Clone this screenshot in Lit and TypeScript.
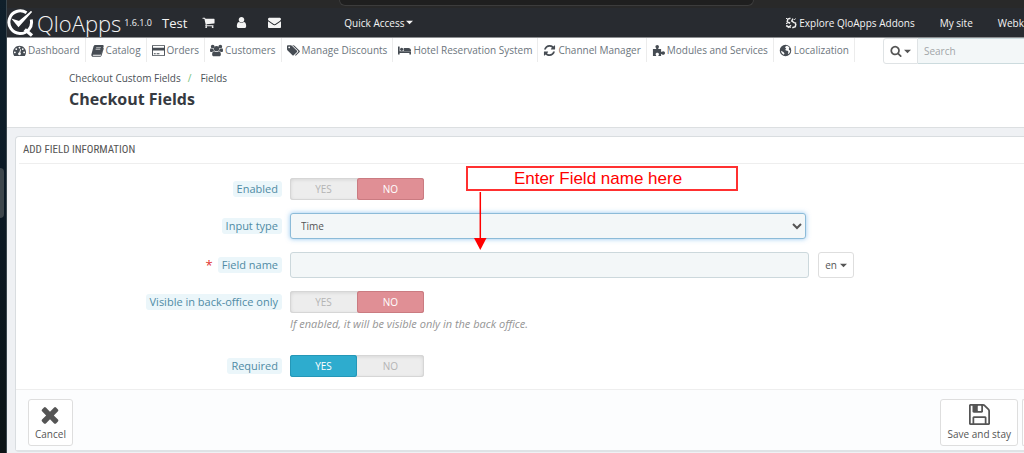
import { LitElement, html, css, svg, nothing } from "lit";
import { customElement, property, state } from "lit/decorators.js";

interface Glyph {
  box: string;
  d: string;
}

const glyphs: Record<string, Glyph> = {
  cart: {
    box: "0 0 1792 1792",
    d: "M704 1536q0 52-38 90t-90 38-90-38-38-90 38-90 90-38 90 38 38 90zm896 0q0 52-38 90t-90 38-90-38-38-90 38-90 90-38 90 38 38 90zm128-1088v512q0 24-16.500 42.500t-40.500 21.500l-1044 122q13 60 13 70 0 16-24 64h920q26 0 45 19t19 45-19 45-45 19h-1024q-26 0-45-19t-19-45q0-11 8-31.500t16-36 21.500-40 15.500-29.500l-177-823h-204q-26 0-45-19t-19-45 19-45 45-19h256q16 0 28.500 6.500t19.500 15.500 13 24.500 8 26 5.500 29.500 4.500 26h1201q26 0 45 19t19 45z",
  },
  user: {
    box: "0 0 1792 1792",
    d: "M1536 1399q0 109-62.500 187t-150.500 78h-854q-88 0-150.500-78t-62.500-187q0-85 8.500-160.500t31.500-152 58.500-131 94-89 134.500-34.500q131 128 313 128t313-128q76 0 134.500 34.500t94 89 58.500 131 31.500 152 8.500 160.500zm-256-887q0 159-112.500 271.500t-271.500 112.500-271.500-112.500-112.500-271.500 112.500-271.500 271.500-112.500 271.500 112.500 112.500 271.500z",
  },
  mail: {
    box: "0 0 1792 1792",
    d: "M1792 710v794q0 66-47 113t-113 47h-1472q-66 0-113-47t-47-113v-794q44 49 101 87 362 246 497 345 57 42 92.500 65.500t94.500 48 110 24.500h2q51 0 110-24.500t94.500-48 92.500-65.500q170-123 498-345 57-39 100-87zm0-294q0 79-49 151t-122 123q-376 261-468 325-10 7-42.500 31t-54 38.500-52 32.500-57.500 27-50 9h-2q-23 0-50-9t-57.500-27-52-32.500-54-38.500-42.500-31q-91-64-262-182.500t-205-142.500q-62-42-117-115.500t-55-136.500q0-78 41.500-130t118.500-52h1472q65 0 112.500 47t47.500 113z",
  },
  gauge: {
    box: "0 0 1792 1792",
    d: "M384 1152q0-53-37.500-90.500t-90.500-37.500-90.500 37.500-37.500 90.500 37.500 90.500 90.500 37.500 90.500-37.500 37.500-90.500zm192-448q0-53-37.500-90.500t-90.500-37.500-90.500 37.500-37.500 90.500 37.500 90.500 90.500 37.500 90.500-37.500 37.500-90.500zm428 481l101-382q6-26-7.500-48.500t-38.500-29.500-48 6.500-30 39.500l-101 382q-60 5-107 43.500t-63 98.500q-20 77 20 146t117 89 146-20 89-117q16-60-6-117t-72-91zm660-33q0-53-37.500-90.500t-90.500-37.500-90.500 37.500-37.500 90.500 37.500 90.500 90.500 37.500 90.500-37.500 37.500-90.500zm-640-640q0-53-37.500-90.500t-90.500-37.500-90.500 37.500-37.500 90.500 37.500 90.500 90.500 37.500 90.500-37.500 37.500-90.500zm448 192q0-53-37.500-90.500t-90.500-37.500-90.500 37.500-37.500 90.500 37.500 90.500 90.500 37.500 90.500-37.500 37.500-90.500zm320 448q0 261-141 483-19 29-54 29h-1402q-35 0-54-29-141-221-141-483 0-182 71-348t191-286 286-191 348-71 348 71 286 191 191 286 71 348z",
  },
  book: {
    box: "0 0 14 14",
    d: "M4.600 1h7.800c1 0 1.500.7 1.200 1.600l-2.300 7.800c-.2.8-.9 1.200-1.700 1.200H2.500c-.6 0-.9.2-.7.6.1.3.4.4.8.4h7.300c.4 0 .7-.2.8-.6l2.500-7.900c.5.3.6.8.4 1.400l-2.200 6.900c-.3.800-1 1.400-1.900 1.400H2.400C1 13.800 0 12.600.4 11.300L2.700 2.800C3 1.600 3.600 1 4.600 1zM5.700 3.200l-.2.7h5l.2-.7zM5.100 5.200l-.2.7h5l.2-.7z",
  },
  card: {
    box: "0 0 1792 1792",
    d: "M1632 128q66 0 113 47t47 113v1216q0 66-47 113t-113 47h-1472q-66 0-113-47t-47-113v-1216q0-66 47-113t113-47h1472zm-1472 128q-13 0-22.500 9.500t-9.500 22.500v224h1536v-224q0-13-9.500-22.500t-22.500-9.500h-1472zm1472 1280q13 0 22.500-9.500t9.500-22.500v-608h-1536v608q0 13 9.500 22.500t22.500 9.500h1472zm-1376-128v-128h256v128h-256zm384 0v-128h384v128h-384z",
  },
  group: {
    box: "0 0 14 14",
    d: "M2.900.8a2 2 0 1 1 0 4 2 2 0 0 1 0-4zM11.100.8a2 2 0 1 1 0 4 2 2 0 0 1 0-4zM7 2.200a2.800 2.800 0 1 1 0 5.600 2.800 2.800 0 0 1 0-5.600zM1.100 4.700c1 .8 2 .8 2.600.6 0 .9.300 1.500.7 2C3.400 7.500 2.800 8 2.400 8.700H1.300C.5 8.700 0 8.100 0 7.300c0-1 .2-2.600 1.100-2.600zM12.900 4.700c-1 .8-2 .8-2.600.6 0 .9-.3 1.500-.7 2 1 .2 1.600.7 2 1.400h1.100c.8 0 1.300-.6 1.300-1.400 0-1-.2-2.600-1.100-2.600zM4.600 7.800c1.500 1.200 3.300 1.200 4.800 0 1.700 0 2.300 1.600 2.300 3.600 0 1.200-.7 1.900-1.700 1.900H4c-1 0-1.700-.7-1.700-1.900 0-2 .6-3.600 2.300-3.600z",
  },
  tags: {
    box: "0 64 1920 1664",
    d: "M448 448q0-53-37.500-90.500t-90.500-37.500-90.500 37.500-37.500 90.500 37.500 90.500 90.500 37.500 90.500-37.500 37.500-90.500zm1067 576q0 53-37 90l-491 492q-39 37-91 37-53 0-90-37l-715-716q-38-37-64.500-101t-26.500-117v-416q0-52 38-90t90-38h416q53 0 117 26.500t102 64.500l715 714q37 39 37 91zm384 0q0 53-37 90l-491 492q-39 37-91 37-36 0-59-14t-53-45l470-470q37-37 37-90 0-52-37-91l-715-714q-38-38-102-64.500t-117-26.500h224q53 0 117 26.500t102 64.500l715 714q37 39 37 91z",
  },
  bed: {
    box: "0 0 2048 1792",
    d: "M256 1024h1728q26 0 45 19t19 45v448h-256v-256h-1536v256h-256v-1216q0-26 19-45t45-19h128q26 0 45 19t19 45v704zm576-320q0-106-75-181t-181-75-181 75-75 181 75 181 181 75 181-75 75-181zm1216 256v-64q0-159-112.500-271.500t-271.500-112.500h-704q-26 0-45 19t-19 45v384h1152z",
  },
  refresh: {
    box: "0 0 1792 1792",
    d: "M1639 1056q0 5-1 7-64 268-268 434.500t-478 166.500q-146 0-282.500-55t-243.500-157l-129 129q-19 19-45 19t-45-19-19-45v-448q0-26 19-45t45-19h448q26 0 45 19t19 45-19 45l-137 137q71 66 161 102t187 36q134 0 250-65t186-179q11-17 53-117 8-23 30-23h192q13 0 22.500 9.500t9.500 22.500zm25-800v448q0 26-19 45t-45 19h-448q-26 0-45-19t-19-45 19-45l138-138q-148-137-349-137-134 0-250 65t-186 179q-11 17-53 117-8 23-30 23h-199q-13 0-22.500-9.500t-9.500-22.500v-7q65-268 270-434.500t480-166.500q146 0 284 55.500t245 156.500l130-129q19-19 45-19t45 19 19 45z",
  },
  puzzle: {
    box: "0 0 14 14",
    d: "M1 5.500h3.200c.5 0 .6-.4.300-.8-.5-.6-.8-1-.8-1.700C3.700 1.800 4.500 1 5.600 1s1.900.8 1.900 2c0 .7-.3 1.100-.7 1.700-.3.400-.2.800.3.800h2.700v2.600c0 .5.400.6.800.3.500-.4.900-.6 1.500-.6 1.100 0 1.900.8 1.900 1.900s-.8 1.900-1.900 1.900c-.6 0-1-.2-1.500-.6-.4-.3-.8-.2-.8.300V13H7.300c-.4 0-.6-.4-.3-.8.3-.4.5-.7.5-1.200 0-1-.8-1.600-1.800-1.600s-1.800.6-1.800 1.600c0 .5.200.8.5 1.200.3.400.1.800-.3.800H1z",
  },
  globe: {
    box: "0 0 14 14",
    d: "M7 .8a6.200 6.200 0 1 1 0 12.400A6.200 6.200 0 0 1 7 .8zM8.500 2L7 2.600 6.600 4l1.200.8-1 1 .6 1.200 1.800.2 1 1.200-.6 1.700.6.800c1.200-1 1.900-2.300 1.900-3.900l-1.200-.6-.4-1.400.8-1C10.600 3 9.600 2.300 8.500 2zM2.200 7.400c.1 2 1.300 3.600 3.100 4.300l.6-1.500-1.200-1.500z",
  },
  search: {
    box: "0 0 1792 1792",
    d: "M1216 832q0-185-131.500-316.500t-316.500-131.500-316.500 131.500-131.500 316.500 131.500 316.500 316.500 131.500 316.500-131.500 131.500-316.500zm512 832q0 52-38 90t-90 38q-54 0-90-38l-343-342q-179 124-399 124-143 0-273.500-55.500t-225-150-150-225-55.500-273.500 55.500-273.500 150-225 225-150 273.500-55.500 273.500 55.500 225 150 150 225 55.500 273.500q0 220-124 399l343 343q37 37 37 90z",
  },
  times: {
    box: "256 256 1280 1344",
    d: "M1490 1322q0 40-28 68l-136 136q-28 28-68 28t-68-28l-294-294-294 294q-28 28-68 28t-68-28l-136-136q-28-28-28-68t28-68l294-294-294-294q-28-28-28-68t28-68l136-136q28-28 68-28t68 28l294 294 294-294q28-28 68-28t68 28l136 136q28 28 28 68t-28 68l-294 294 294 294q28 28 28 68z",
  },
  floppy: {
    box: "128 128 1536 1536",
    d: "M512 1536h768v-384h-768v384zm896 0h128v-896q0-14-10-38.500t-20-34.500l-281-281q-10-10-34-20t-39-10v416q0 40-28 68t-68 28h-576q-40 0-68-28t-28-68v-416h-128v1280h128v-416q0-40 28-68t68-28h832q40 0 68 28t28 68v416zm-384-928v-320q0-13-9.500-22.500t-22.500-9.500h-192q-13 0-22.500 9.500t-9.500 22.500v320q0 13 9.500 22.500t22.500 9.500h192q13 0 22.500-9.500t9.500-22.500zm640 32v928q0 40-28 68t-68 28h-1344q-40 0-68-28t-28-68v-1344q0-40 28-68t68-28h928q40 0 88 20t76 48l280 280q28 28 48 76t20 88z",
  },
  caret: { box: "0 0 8 8", d: "M0 2h8L4 6z" },
};

const icon = (name: string, cls = "icon") => {
  const g = glyphs[name];
  return html`<svg class=${cls} viewBox=${g.box} aria-hidden="true">
    ${svg`<path fill="currentColor" fill-rule="evenodd" d=${g.d}></path>`}
  </svg>`;
};

@customElement("yes-no-switch")
class YesNoSwitch extends LitElement {
  @property() name = "";
  @property() legend = "";
  @property({ type: Boolean }) on = false;

  static styles = css`
    :host {
      display: block;
    }
    .switch {
      display: grid;
      grid-template-columns: 1fr 1fr;
      width: 134px;
      height: 22px;
      margin: 0;
      padding: 0;
      border: 0;
      border-radius: 3px;
      background: #ededed;
      box-shadow: inset 0 0 0 1px #d6d6d6, inset 0 1px 4px rgba(0, 0, 0, 0.14);
    }
    .half {
      display: grid;
      place-items: center;
      border-radius: 3px;
      color: #b4b4b4;
      font-size: 10px;
      line-height: 20px;
      cursor: pointer;
    }
    .radio {
      appearance: none;
      width: 0;
      height: 0;
      margin: 0;
      grid-area: 1 / 1;
    }
    .text {
      grid-area: 1 / 1;
    }
    .yes.active {
      color: #fff;
      background: #2eacce;
      box-shadow: inset 0 0 0 1px #2597b7;
    }
    .no.active {
      color: #fff;
      background: #e08f95;
      box-shadow: inset 0 0 0 1px #ca7b81;
    }
  `;

  render() {
    return html`<fieldset class="switch" aria-label=${this.legend}>
      <label class="half yes ${this.on ? "active" : ""}">
        <input class="radio" type="radio" name=${this.name} .checked=${this.on} @change=${() => (this.on = true)} />
        <span class="text">YES</span>
      </label>
      <label class="half no ${this.on ? "" : "active"}">
        <input class="radio" type="radio" name=${this.name} .checked=${!this.on} @change=${() => (this.on = false)} />
        <span class="text">NO</span>
      </label>
    </fieldset>`;
  }
}

const menu: [string, string][] = [
  ["gauge", "Dashboard"],
  ["book", "Catalog"],
  ["card", "Orders"],
  ["group", "Customers"],
  ["tags", "Manage Discounts"],
  ["bed", "Hotel Reservation System"],
  ["refresh", "Channel Manager"],
  ["puzzle", "Modules and Services"],
  ["globe", "Localization"],
];

@customElement("app-root")
class AppRoot extends LitElement {
  @state() private fieldName = "";

  static styles = css`
    :host {
      display: block;
      font-family: "Open Sans", "Noto Sans", sans-serif;
      font-size: 10px;
      line-height: 16px;
      color: #555;
    }
    * {
      box-sizing: border-box;
    }
    a {
      color: inherit;
      text-decoration: none;
    }
    button,
    input,
    select {
      font: inherit;
      color: inherit;
    }
    svg {
      display: block;
      flex: none;
    }
    .desktop {
      display: grid;
      grid-template-columns: 7px minmax(0, 1fr);
      min-height: 100vh;
      overflow: hidden;
      position: relative;
    }
    .edge {
      background: linear-gradient(#10202b, #0b1925 45%, #0c1416);
      border-right: 1px solid #3a464d;
      padding-top: 168px;
    }
    .handle {
      width: 4px;
      height: 50px;
      border-radius: 0 4px 4px 0;
      background: #3d464c;
    }
    .window {
      display: flex;
      flex-direction: column;
      background: #eff1f4;
    }
    .chrome {
      height: 8px;
      padding: 0 270px 0 332px;
      background: #292929;
    }
    .address {
      height: 6px;
      border: 1px solid #3c3c3c;
      border-top: 0;
      border-radius: 0 0 7px 7px;
      background: #1f1f1f;
    }
    .topbar {
      display: flex;
      align-items: center;
      height: 30px;
      background: #282b30;
      border-bottom: 1px solid #8d8f91;
      color: #f4f4f4;
      white-space: nowrap;
    }
    .brand {
      display: flex;
      align-items: center;
      gap: 2px;
      font-size: 22px;
      line-height: 28px;
      font-weight: 300;
    }
    .logo {
      width: 28px;
      height: 28px;
    }
    .version {
      margin-left: 3px;
      font-size: 9px;
    }
    .shop {
      margin-left: 10px;
      font-size: 13px;
    }
    .tools {
      display: flex;
      gap: 20px;
      margin-left: 15px;
    }
    .tool {
      display: block;
    }
    .icon {
      width: 13px;
      height: 13px;
    }
    .caret {
      width: 7px;
      height: 7px;
    }
    .quick {
      display: flex;
      align-items: center;
      gap: 2px;
      margin-left: 63px;
      padding: 0;
      border: 0;
      background: none;
    }
    .links {
      display: flex;
      gap: 25px;
      margin-left: auto;
    }
    .addons {
      display: flex;
      align-items: center;
      gap: 2px;
    }
    .swirl {
      width: 12px;
      height: 12px;
    }
    .menubar {
      display: flex;
      align-items: flex-start;
      height: 27px;
      padding-left: 1px;
      background: #fff;
      white-space: nowrap;
    }
    .items {
      display: flex;
      margin: 0;
      padding: 0;
      list-style: none;
    }
    .item {
      display: flex;
      align-items: center;
      gap: 2px;
      height: 24px;
      padding: 0 5px;
      border-right: 1px solid #ececec;
      color: #6c757d;
    }
    .item .icon {
      color: #464c53;
    }
    .search {
      display: flex;
      flex: 1;
      min-width: 0;
      height: 26px;
      margin-left: 28px;
      color: #555;
    }
    .scope {
      display: flex;
      align-items: center;
      gap: 2px;
      width: 35px;
      padding: 0 6px;
      border: 1px solid #dfe3e5;
      border-radius: 3px 0 0 3px;
      background: #fff;
    }
    .scope .icon {
      width: 12px;
      height: 12px;
    }
    .query {
      flex: 1;
      min-width: 0;
      padding: 0 6px;
      border: solid #ccdbde;
      border-width: 1px 0;
      border-radius: 0;
      background: #f3f7f8;
    }
    .query::placeholder {
      color: #a2a6a8;
      opacity: 1;
    }
    .heading {
      height: 63px;
      padding: 5px 62px;
      background: #fff;
      border-bottom: 1px solid #dcdfe1;
    }
    .crumbs {
      display: flex;
      margin: 0;
      padding: 0;
      list-style: none;
      color: #4b5157;
    }
    .slash {
      padding: 0 9px 0 7px;
      color: #72c279;
    }
    .title {
      margin: 1px 0 0;
      font-size: 16px;
      line-height: 24px;
      font-weight: 700;
      color: #363a41;
    }
    .panel {
      margin: 8px 0 0 8px;
      border: 1px solid #d9dde0;
      border-right: 0;
      border-bottom: 2px solid #dfe3e6;
      border-radius: 4px 0 0 4px;
      background: #fff;
    }
    .panel-title {
      margin: 0 0 0 3px;
      padding: 0 4px;
      border-bottom: 1px solid #eee;
      font-family: "Ubuntu Condensed", "Roboto Condensed", "Roboto", sans-serif;
      font-size: 11px;
      line-height: 26px;
      font-weight: 400;
    }
    .form {
      display: grid;
      grid-template-columns: 266px minmax(0, 1fr);
      column-gap: 8px;
      row-gap: 13px;
      padding: 14px 0 12px;
    }
    .name {
      display: flex;
      justify-content: flex-end;
      align-items: center;
      gap: 5px;
      height: 26px;
      font-size: 11px;
    }
    .short {
      height: 22px;
    }
    .tag {
      padding: 0 4px;
      border-radius: 3px;
      background: #ebf6fa;
      color: #4f8ba5;
    }
    .star {
      color: #e0322f;
      font-size: 13px;
    }
    .kind {
      display: block;
      width: calc(100% - 218px);
      height: 26px;
      padding: 0 6px;
      border: 1px solid #8cbbd8;
      border-radius: 3px;
      background-color: #f3f7f8;
      box-shadow: 0 0 5px rgba(102, 175, 233, 0.7);
      outline: none;
    }
    .pair {
      display: flex;
      gap: 9px;
      padding-right: 170px;
    }
    .value {
      flex: 1;
      min-width: 0;
      height: 26px;
      padding: 0 8px;
      border: 1px solid #ccd8dc;
      border-radius: 3px;
      background: #f3f7f8;
    }
    .lang {
      display: flex;
      align-items: center;
      justify-content: center;
      gap: 3px;
      width: 36px;
      height: 26px;
      padding: 0;
      border: 1px solid #dedede;
      border-radius: 3px;
      background: #fff;
    }
    .help {
      margin: 3px 0 10px;
      font-size: 11px;
      font-style: italic;
      color: #959595;
    }
    .footer {
      display: flex;
      justify-content: space-between;
      height: 61px;
      padding: 9px 0 0 12px;
      border-top: 1px solid #eee;
      background: #fcfdfe;
    }
    .saves {
      display: flex;
      gap: 4px;
    }
    .action {
      display: flex;
      flex-direction: column;
      align-items: center;
      justify-content: flex-end;
      gap: 1px;
      height: 47px;
      padding: 0 6px 3px;
      border: 1px solid #dedede;
      border-radius: 3px;
      background: #fff;
      white-space: nowrap;
    }
    .partial {
      width: 2px;
      padding: 0;
      border-right: 0;
      border-radius: 3px 0 0 3px;
    }
    .big {
      width: 21px;
      height: 21px;
    }
    .cross {
      width: 18px;
      height: 20px;
    }
    .callout {
      position: absolute;
      left: 466px;
      top: 166px;
      width: 272px;
      color: #f00;
    }
    .note {
      border: 2px solid #ff3030;
      background: #fff;
      font-family: "Liberation Sans", Arial, sans-serif;
      font-size: 17px;
      line-height: 21px;
      text-align: center;
      padding-right: 8px;
    }
    .arrow {
      width: 14px;
      height: 60px;
      margin-left: 8px;
    }
  `;

  render() {
    return html`
      <div class="desktop">
        <div class="edge"><div class="handle"></div></div>
        <div class="window">
          <div class="chrome"><div class="address"></div></div>
          ${this.renderTopbar()} ${this.renderMenu()}
          <section class="heading">
            <ol class="crumbs">
              <li><a href="#">Checkout Custom Fields</a></li>
              <li class="slash">/</li>
              <li>Fields</li>
            </ol>
            <h1 class="title">Checkout Fields</h1>
          </section>
          ${this.renderPanel()}
        </div>
        <div class="callout">
          <div class="note">Enter Field name here</div>
          <svg class="arrow" viewBox="0 0 14 60" aria-hidden="true">
            <path d="M6.300 1v46" stroke="#f00" stroke-width="1.500"></path>
            <path d="M0 47h12.500L6.300 59z" fill="#f00"></path>
          </svg>
        </div>
      </div>
    `;
  }

  private renderTopbar() {
    return html`<header class="topbar">
      <a class="brand" href="#">
        <svg class="logo" viewBox="1 0 28 28" fill="none" stroke="#fff" aria-hidden="true">
          <path d="M20.500 3.800A11.300 11.300 0 1 0 25.200 10.500" stroke-width="3"></path>
          <path d="M18.800 20.500l7.200 6" stroke-width="3.400"></path>
          <path d="M7.500 11l5 6L25.500 2.500 13 12.800z" fill="#fff" stroke-width="1.500"></path>
        </svg>
        <span>QloApps</span>
      </a>
      <span class="version">1.6.1.0</span>
      <a class="shop" href="#">Test</a>
      <nav class="tools" aria-label="Notifications">
        <a class="tool" href="#" aria-label="Orders">${icon("cart")}</a>
        <a class="tool" href="#" aria-label="Customers">${icon("user")}</a>
        <a class="tool" href="#" aria-label="Messages">${icon("mail")}</a>
      </nav>
      <button class="quick" type="button">Quick Access ${icon("caret", "caret")}</button>
      <nav class="links" aria-label="Account">
        <a class="addons" href="#">
          <svg class="swirl" viewBox="0 0 12 12" fill="none" stroke="#eee" stroke-width="1.500" aria-hidden="true">
            <path d="M5.500 1.300L2.800 2 2.200 4.800l3 1.400M1.200 8.500l2.600 1.700L6 8.300M8 1.600L6.800 4l2.300 1.600 2 .6M10.900 6.500l-.6 3.300-3 1"></path>
            <path d="M1 1l1 1M10.500 1.500L9.300 3M1 6.500h1.500M5 11l.5-1" stroke-width="1"></path>
          </svg>
          Explore QloApps Addons
        </a>
        <a href="#">My site</a>
        <a href="#">Webk</a>
      </nav>
    </header>`;
  }

  private renderMenu() {
    return html`<div class="menubar">
      <nav aria-label="Main">
        <ul class="items">
          ${menu.map(([glyph, text]) => html`<li><a class="item" href="#">${icon(glyph)}${text}</a></li>`)}
        </ul>
      </nav>
      <form class="search" role="search">
        <button class="scope" type="button" aria-label="Search in">${icon("search")}${icon("caret", "caret")}</button>
        <input class="query" type="search" placeholder="Search" aria-label="Search" />
      </form>
    </div>`;
  }

  private row(label: string, control: unknown, opts: { id?: string; required?: boolean; short?: boolean } = {}) {
    return html`<div class="name ${opts.short ? "short" : ""}">
        ${opts.required ? html`<span class="star">*</span>` : nothing}
        ${opts.id ? html`<label class="tag" for=${opts.id}>${label}</label>` : html`<span class="tag">${label}</span>`}
      </div>
      <div>${control}</div>`;
  }

  private toggle(label: string, name: string, on = false) {
    return html`<yes-no-switch name=${name} legend=${label} ?on=${on}></yes-no-switch>`;
  }

  private renderPanel() {
    return html`<form class="panel">
      <h2 class="panel-title">ADD FIELD INFORMATION</h2>
      <div class="form">
        ${this.row("Enabled", this.toggle("Enabled", "enabled"), { short: true })}
        ${this.row(
          "Input type",
          html`<select class="kind" id="kind">
            <option>Time</option>
            <option>Text</option>
            <option>Date</option>
          </select>`,
          { id: "kind" },
        )}
        ${this.row(
          "Field name",
          html`<div class="pair">
            <input
              class="value"
              id="field-name"
              type="text"
              .value=${this.fieldName}
              @input=${(e: Event) => (this.fieldName = (e.target as HTMLInputElement).value)}
            />
            <button class="lang" type="button">en ${icon("caret", "caret")}</button>
          </div>`,
          { id: "field-name", required: true },
        )}
        ${this.row(
          "Visible in back-office only",
          html`${this.toggle("Visible in back-office only", "visible")}
            <p class="help">If enabled, it will be visible only in the back office.</p>`,
          { short: true },
        )}
        ${this.row("Required", this.toggle("Required", "required", true), { short: true })}
      </div>
      <div class="footer">
        <button class="action" type="button">${icon("times", "cross")}Cancel</button>
        <div class="saves">
          <button class="action" type="button">${icon("floppy", "big")}Save and stay</button>
          <button class="action partial" type="submit" aria-label="Save"></button>
        </div>
      </div>
    </form>`;
  }
}
